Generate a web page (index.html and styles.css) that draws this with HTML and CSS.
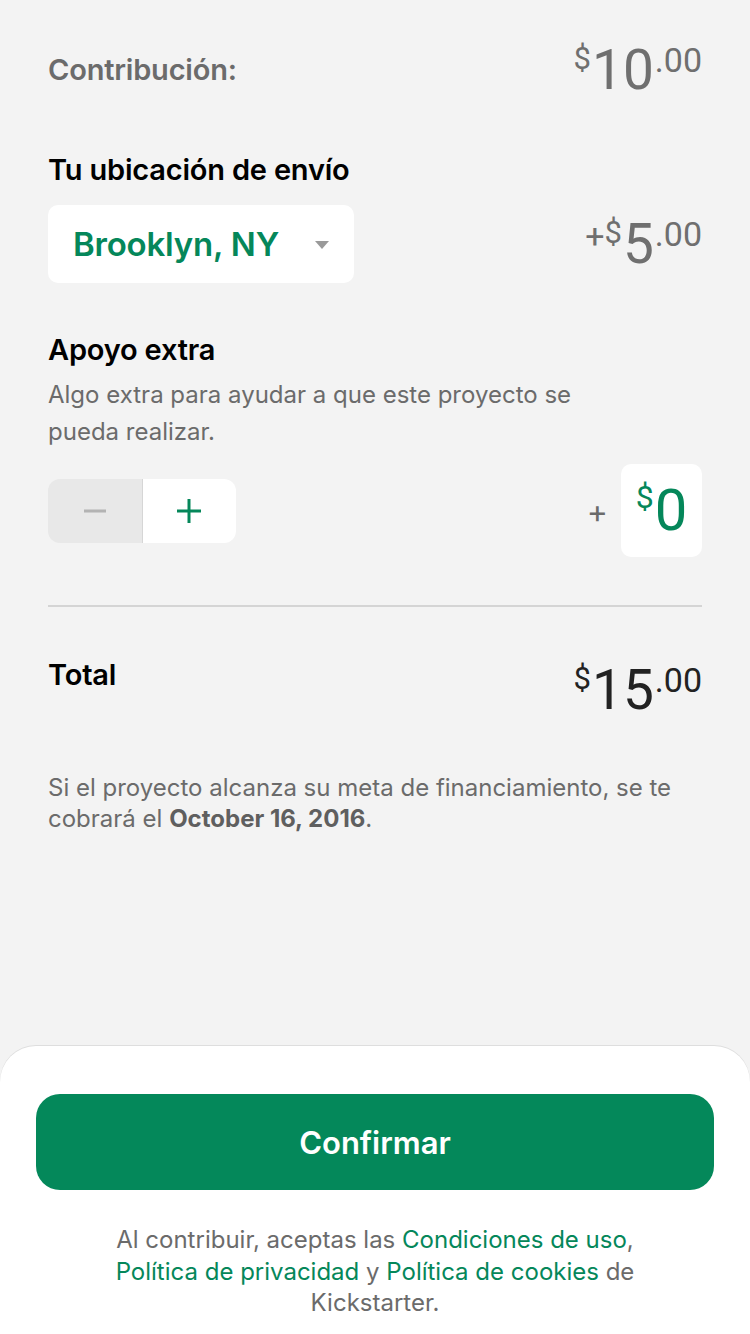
FILE: index.html
```html
<!DOCTYPE html>
<html lang="es">
<head>
<meta charset="utf-8">
<link rel="stylesheet" href="styles.css">
</head>
<body>
<div class="page">
  <main class="content">
    <div class="row contrib">
      <span class="label-gray">Contribución:</span>
      <span class="price gray"><span class="cur">$</span><span class="int">10</span><span class="dec">.00</span></span>
    </div>

    <h2 class="heading ship-h">Tu ubicación de envío</h2>
    <div class="row ship">
      <button class="dropdown">
        <span class="loc">Brooklyn, NY</span>
        <svg class="caret" width="16" height="10" viewBox="0 0 16 10"><path d="M1 1 L15 1 L8 9 Z" fill="#9a9a9a"/></svg>
      </button>
      <span class="price gray"><span class="plus-sign">+</span><span class="cur">$</span><span class="int">5</span><span class="dec">.00</span></span>
    </div>

    <h2 class="heading extra-h">Apoyo extra</h2>
    <p class="desc">Algo extra para ayudar a que este proyecto se pueda realizar.</p>
    <div class="row extra">
      <div class="stepper">
        <button class="step minus"><svg width="26" height="26" viewBox="0 0 26 26"><path d="M2 13 H24" stroke="#b3b3b3" stroke-width="3"/></svg></button>
        <button class="step plus"><svg width="26" height="26" viewBox="0 0 26 26"><path d="M1 13 H25 M13 1 V25" stroke="#05875a" stroke-width="3"/></svg></button>
      </div>
      <div class="extra-amount">
        <span class="add">+</span>
        <div class="amount-box"><span class="cur">$</span><span class="int">0</span></div>
      </div>
    </div>

    <hr class="divider">

    <div class="row total">
      <span class="heading">Total</span>
      <span class="price dark"><span class="cur">$</span><span class="int">15</span><span class="dec">.00</span></span>
    </div>

    <p class="note">Si el proyecto alcanza su meta de financiamiento, se te cobrará el <b>October 16, 2016</b>.</p>
  </main>

  <footer class="sheet">
    <button class="confirm">Confirmar</button>
    <p class="terms">Al contribuir, aceptas las <a>Condiciones de uso</a>, <a>Política de privacidad</a> y <a>Política de cookies</a> de Kickstarter.</p>
  </footer>
</div>
</body>
</html>
```

FILE: styles.css
```css
* { box-sizing: border-box; }
html, body { margin: 0; padding: 0; }
body {
  background: #f3f3f3;
  font-family: Inter, Roboto, "Liberation Sans", sans-serif;
  color: #000;
}
.page {
  height: 1334px;
  display: flex;
  flex-direction: column;
  overflow: hidden;
}
.content {
  flex: 1;
  padding: 0 48px;
}
.row {
  display: flex;
  justify-content: space-between;
}
.contrib {
  margin-top: 40px;
  height: 60px;
  align-items: center;
}
.label-gray {
  font-size: 29px;
  font-weight: 600;
  color: #6b6b6b;
  line-height: 32px;
  letter-spacing: -0.2px;
}
.price {
  display: inline-flex;
  align-items: flex-start;
  line-height: 1;
  font-family: Roboto, Inter, sans-serif;
}
.price .cur { font-size: 31px; margin-top: 0; margin-right: 1px; }
.price .int { font-size: 55px; }
.price .dec { font-size: 34px; margin-top: 0; margin-left: 1px; }
.price .plus-sign { font-size: 34px; margin-top: 2px; }
.gray { color: #6f6f6f; }
.dark { color: #222; }

.heading {
  font-size: 29px;
  font-weight: 600;
  line-height: 32px;
  margin: 0;
  color: #000;
  letter-spacing: -0.2px;
}
.ship-h { margin-top: 54px; }
.ship {
  margin-top: 19px;
  height: 78px;
  align-items: center;
}
.dropdown {
  height: 78px;
  width: 306px;
  border: none;
  background: #fff;
  border-radius: 10px;
  display: flex;
  align-items: center;
  justify-content: space-between;
  padding: 0 24px 0 25px;
  font-family: inherit;
}
.loc {
  font-size: 33px;
  font-weight: 600;
  color: #05875a;
  letter-spacing: -0.2px;
}
.caret { margin-top: 2px; }

.extra-h { margin-top: 51px; }
.desc {
  margin: 10px 0 0;
  font-size: 24px;
  line-height: 37px;
  color: #6b6b6b;
  max-width: 590px;
}
.extra {
  margin-top: 14px;
  height: 93px;
  align-items: center;
}
.stepper {
  display: flex;
  height: 64px;
  width: 188px;
  border-radius: 12px;
  overflow: hidden;
}
.step {
  flex: 1;
  border: none;
  display: flex;
  align-items: center;
  justify-content: center;
  padding: 0;
}
.minus { background: #e8e8e8; border-right: 1px solid #d6d6d6; }
.plus { background: #fff; }
.extra-amount {
  display: flex;
  align-items: center;
  gap: 13px;
}
.add {
  font-size: 32px;
  color: #6b6b6b;
  line-height: 1;
  margin-top: 2px;
}
.amount-box {
  width: 81px;
  height: 93px;
  background: #fff;
  border-radius: 10px;
  display: flex;
  align-items: flex-start;
  justify-content: center;
  padding-top: 17px;
  color: #05875a;
  line-height: 1;
  font-family: Roboto, Inter, sans-serif;
}
.amount-box .cur { font-size: 32px; margin-top: 0; margin-right: 1px; }
.amount-box .int { font-size: 58px; }

.divider {
  margin: 48px 0 0;
  border: none;
  height: 2px;
  background: #d4d4d4;
}
.total {
  margin-top: 52px;
  align-items: flex-start;
}
.total .price { margin-top: 4px; }
.note {
  margin: 54px 0 0;
  font-size: 24px;
  line-height: 31px;
  color: #6b6b6b;
}
.note b { font-weight: 700; color: #5f5f5f; }

.sheet {
  height: 288px;
  background: #fff;
  border-radius: 36px 36px 0 0;
  box-shadow: 0 -1px 0 #dedede;
  padding: 48px 36px 0;
}
.confirm {
  width: 100%;
  height: 96px;
  border: none;
  border-radius: 24px;
  background: #04885a;
  color: #fff;
  font-family: inherit;
  font-size: 31px;
  font-weight: 600;
}
.terms {
  margin: 34px 0 0;
  text-align: center;
  font-size: 24px;
  line-height: 31.5px;
  color: #6b6b6b;
  padding: 0 72px;
}
.terms a { color: #05875a; }
```
